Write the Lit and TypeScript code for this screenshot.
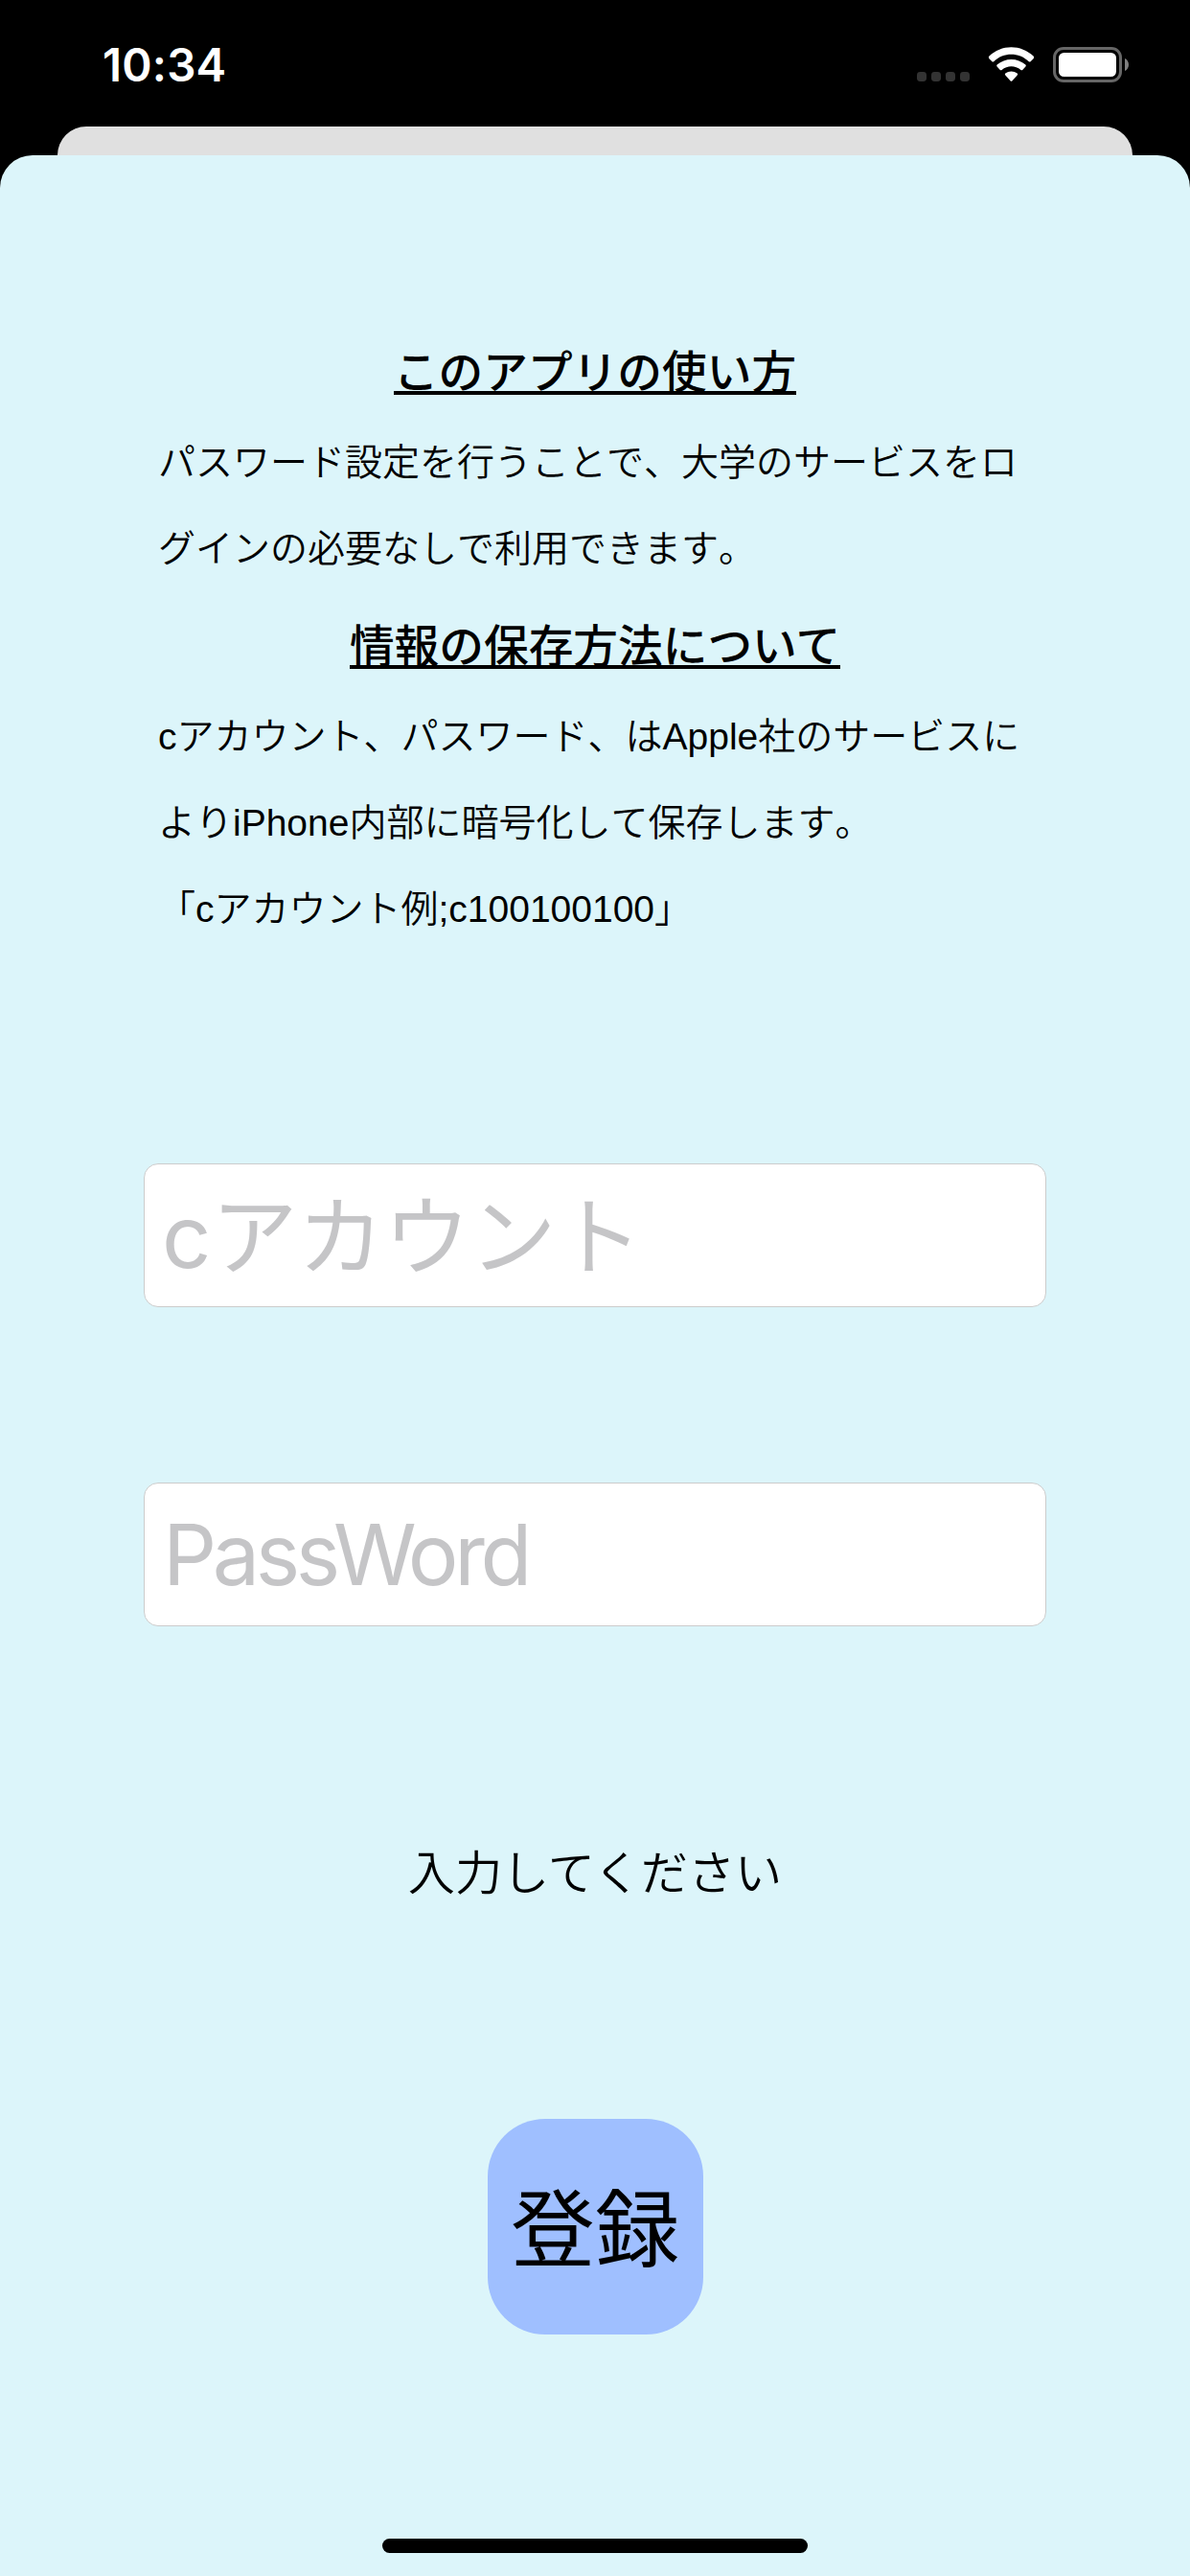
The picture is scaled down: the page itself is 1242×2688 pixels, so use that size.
import { LitElement, html, css } from "lit";
import { customElement, property } from "lit/decorators.js";

@customElement("status-bar")
class StatusBar extends LitElement {
  @property() time = "";

  static styles = css`
    :host {
      display: flex;
      justify-content: space-between;
      box-sizing: border-box;
      height: 132px;
      padding: 36px 64px 0 107px;
      color: #fff;
    }
    .time {
      font: 600 47.5px/64px Inter, "Liberation Sans", sans-serif;
      letter-spacing: 0.2px;
    }
    .icons {
      display: flex;
      height: 64px;
    }
  `;

  render() {
    return html`
      <div class="time">${this.time}</div>
      <svg class="icons" width="221" height="64" viewBox="957 36 221 64">
        <g fill="#333">
          <rect x="957" y="75" width="10" height="10" rx="3.4" />
          <rect x="972" y="75" width="10" height="10" rx="3.4" />
          <rect x="987" y="75" width="10" height="10" rx="3.4" />
          <rect x="1002" y="75" width="10" height="10" rx="3.4" />
        </g>
        <g fill="#fff">
          <path d="M1032.2 58.8 C1045 46 1065.800 46 1078.800 58.800 Q1079.600 59.900 1078.800 61 L1075.600 64.200 Q1074.700 64.900 1073.800 64.200 C1063.200 54.400 1047.600 54.400 1037.200 64.200 Q1036.300 64.900 1035.400 64.200 L1032.200 61 Q1031.400 59.900 1032.200 58.800Z" />
          <path d="M1040.600 67.600 C1049 60 1062 60 1070.400 67.600 Q1071.300 68.600 1070.400 69.600 L1067.200 72.900 Q1066.300 73.700 1065.400 72.900 C1059.500 67.900 1051.500 67.900 1045.600 72.900 Q1044.700 73.700 1043.800 72.900 L1040.600 69.600 Q1039.700 68.600 1040.600 67.600Z" />
          <path d="M1049.300 76.600 C1053 73.700 1058 73.700 1061.700 76.600 Q1062.700 77.500 1061.700 78.500 L1056.300 84.400 Q1055.500 85.200 1054.700 84.400 L1049.300 78.500 Q1048.300 77.500 1049.300 76.600Z" />
        </g>
        <rect x="1100.5" y="50.500" width="69" height="34" rx="9.500" fill="none" stroke="#666" stroke-width="3" />
        <rect x="1105" y="55" width="60" height="25" rx="5.500" fill="#fff" />
        <path d="M1174 61 C1179.300 63.200 1179.300 71.800 1174 74Z" fill="#7f7f7f" />
      </svg>
    `;
  }
}

@customElement("guide-section")
class GuideSection extends LitElement {
  @property() heading = "";
  @property({ attribute: false }) lines: string[] = [];

  static styles = css`
    :host {
      display: block;
      color: #000;
    }
    .heading {
      height: 60px;
      margin: 0 0 19px;
      font: 500 46.7px/54px "Noto Sans CJK JP", sans-serif;
    }
    .heading span {
      display: block;
      width: fit-content;
      height: 50px;
      margin: 0 auto;
      border-bottom: 4px solid #000;
      white-space: nowrap;
    }
    .line {
      height: 90px;
      font: 350 39px/91px "Liberation Sans", "Noto Sans CJK JP", sans-serif;
      white-space: nowrap;
      text-spacing-trim: space-all;
      font-kerning: none;
    }
  `;

  render() {
    return html`
      <h2 class="heading"><span>${this.heading}</span></h2>
      ${this.lines.map((l) => html`<div class="line">${l}</div>`)}
    `;
  }
}

@customElement("app-root")
class AppRoot extends LitElement {
  static styles = css`
    :host {
      display: flex;
      flex-direction: column;
      height: 2688px;
      background: #000;
      overflow: hidden;
    }
    .behind {
      height: 30px;
      margin: 0 60px;
      background: #e0e0e0;
      border-radius: 30px 30px 0 0;
    }
    .sheet {
      flex: 1;
      display: flex;
      flex-direction: column;
      align-items: center;
      background: #dcf5fa;
      border-radius: 34px 34px 0 0;
    }
    .guide {
      display: flex;
      flex-direction: column;
      gap: 27px;
      width: 912px;
      height: 634px;
      margin-top: 196px;
    }
    .field {
      box-sizing: border-box;
      width: 942px;
      height: 150px;
      margin: 222px 0 0;
      padding: 0 19px;
      border: 1px solid #ccc;
      border-radius: 15px;
      background: #fff;
      outline: none;
      font: 400 88px/148px Inter, "Noto Sans CJK JP", sans-serif;
    }
    .field + .field {
      margin-top: 183px;
    }
    .field::placeholder {
      color: #c5c5c7;
      opacity: 1;
    }
    .account {
      padding: 2px 18px 0;
      font-size: 90px;
    }
    .password {
      letter-spacing: -4.4px;
    }
    .message {
      margin: 221px 0 0;
      font: 350 49.200px/66px "Noto Sans CJK JP", sans-serif;
    }
    .submit {
      width: 225px;
      height: 225px;
      margin: 227px 0 0;
      padding: 0 0 7px;
      border: 0;
      border-radius: 60px;
      background: #9fbfff;
      color: #000;
      font: 400 88px/218px "Noto Sans CJK JP", sans-serif;
    }
    .home {
      width: 444px;
      height: 15px;
      margin: auto 0 24px;
      border-radius: 8px;
      background: #000;
    }
  `;

  render() {
    return html`
      <status-bar time="10:34"></status-bar>
      <div class="behind"></div>
      <main class="sheet" lang="ja">
        <div class="guide">
          <guide-section
            heading="このアプリの使い方"
            .lines=${["パスワード設定を行うことで、大学のサービスをロ", "グインの必要なしで利用できます。"]}
          ></guide-section>
          <guide-section
            heading="情報の保存方法について"
            .lines=${[
              "cアカウント、パスワード、はApple社のサービスに",
              "よりiPhone内部に暗号化して保存します。",
              "「cアカウント例;c100100100」",
            ]}
          ></guide-section>
        </div>
        <input class="field account" placeholder="cアカウント" />
        <input class="field password" placeholder="PassWord" />
        <p class="message">入力してください</p>
        <button class="submit">登録</button>
        <div class="home"></div>
      </main>
    `;
  }
}
